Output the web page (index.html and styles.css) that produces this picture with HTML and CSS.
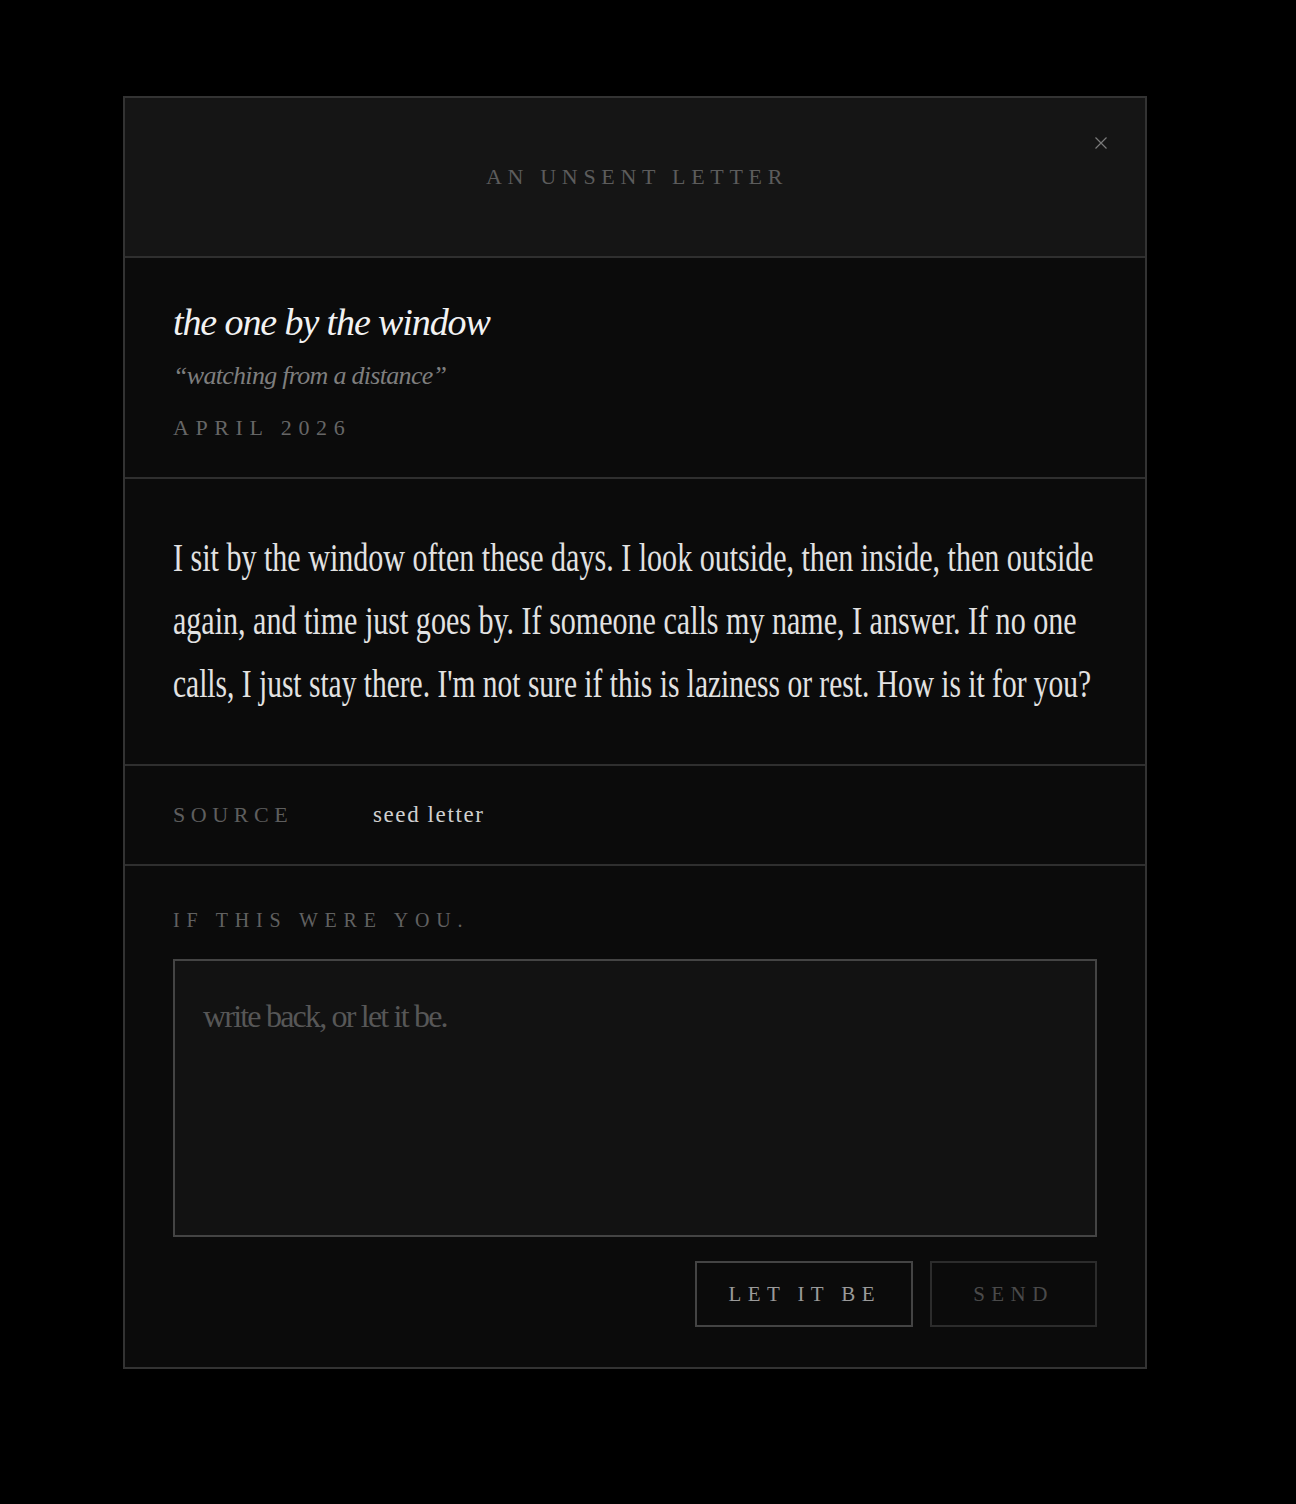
FILE: index.html
```html
<!DOCTYPE html>
<html lang="en">
<head>
<meta charset="utf-8">
<title>An Unsent Letter</title>
<link rel="stylesheet" href="styles.css">
</head>
<body>
<div class="overlay">
  <section class="modal" role="dialog" aria-label="An unsent letter">
    <header class="modal-head">
      <h2 class="modal-title">AN UNSENT LETTER</h2>
      <button class="close" aria-label="Close">
        <svg width="12" height="12" viewBox="0 0 12 12" aria-hidden="true"><path d="M0.5 0.5 L11.5 11.5 M11.5 0.5 L0.5 11.5" stroke="#7a7a7a" stroke-width="1.2" fill="none"/></svg>
      </button>
    </header>
    <div class="meta">
      <h1 class="letter-name">the one by the window</h1>
      <p class="letter-sub">“watching from a distance”</p>
      <p class="letter-date">APRIL 2026</p>
    </div>
    <div class="letter-body">
      <p class="body-text">
        <span class="line">I sit by the window often these days. I look outside, then inside, then outside</span>
        <span class="line">again, and time just goes by. If someone calls my name, I answer. If no one</span>
        <span class="line line-tight">calls, I just stay there. I'm not sure if this is laziness or rest. How is it for you?</span>
      </p>
    </div>
    <div class="source-row">
      <span class="source-label">SOURCE</span>
      <span class="source-value">seed letter</span>
    </div>
    <div class="reply">
      <label class="reply-label" for="reply">IF THIS WERE YOU.</label>
      <textarea id="reply" class="reply-box" placeholder="write back, or let it be."></textarea>
      <div class="actions">
        <button class="btn btn-let">LET IT BE</button>
        <button class="btn btn-send">SEND</button>
      </div>
    </div>
  </section>
</div>
</body>
</html>
```
FILE: styles.css
```css
html, body {
  margin: 0;
  padding: 0;
  background: #000;
}
body {
  font-family: "Liberation Serif", "Times New Roman", serif;
  min-height: 1504px;
}
.overlay {
  padding: 96px 0 0 123px;
}
.modal {
  width: 1024px;
  box-sizing: border-box;
  border: 2px solid #333;
  background: #0b0b0b;
}
.modal-head {
  position: relative;
  height: 158px;
  background: #151515;
  border-bottom: 2px solid #2f2f2f;
  display: flex;
  align-items: center;
  justify-content: center;
}
.modal-title {
  margin: 0;
  padding-left: 4px;
  font-weight: normal;
  font-size: 22px;
  letter-spacing: 5.7px;
  color: #5c5c5c;
  line-height: 28px;
}
.close {
  position: absolute;
  top: 38px;
  right: 37px;
  width: 14px;
  height: 14px;
  padding: 1px;
  border: 0;
  background: none;
  display: flex;
}
.meta {
  padding: 40px 48px 35px;
  border-bottom: 2px solid #2f2f2f;
}
.letter-name {
  margin: 0;
  font-style: italic;
  font-weight: normal;
  font-size: 38px;
  line-height: 48px;
  letter-spacing: -1.1px;
  color: #f2f2f2;
}
.letter-sub {
  margin: 14px 0 0;
  font-style: italic;
  font-size: 26px;
  line-height: 32px;
  letter-spacing: -0.7px;
  color: #7e7e7e;
}
.letter-date {
  margin: 22px 0 0;
  font-size: 22px;
  line-height: 28px;
  letter-spacing: 6.6px;
  color: #666;
}
.letter-body {
  padding: 47px 48px 49px;
  border-bottom: 2px solid #2f2f2f;
}
.body-text {
  margin: 0;
  font-size: 41px;
  line-height: 63px;
  color: #e2e2e2;
}
.line {
  display: block;
  white-space: nowrap;
  transform: scaleX(0.733);
  transform-origin: left center;
}
.line-tight {
  transform: scaleX(0.719);
}
.source-row {
  display: grid;
  grid-template-columns: 200px 1fr;
  align-items: baseline;
  padding: 35px 48px 35px;
  border-bottom: 2px solid #2f2f2f;
}
.source-label {
  font-size: 22px;
  line-height: 28px;
  letter-spacing: 5.6px;
  color: #5e5e5e;
}
.source-value {
  font-size: 23px;
  line-height: 28px;
  letter-spacing: 1.6px;
  color: #d0d0d0;
}
.reply {
  padding: 42px 48px 40px;
}
.reply-label {
  display: block;
  font-size: 20px;
  line-height: 24px;
  letter-spacing: 6.8px;
  color: #616161;
}
.reply-box {
  display: block;
  width: 100%;
  height: 278px;
  box-sizing: border-box;
  margin-top: 27px;
  padding: 31px 28px;
  background: #121212;
  border: 2px solid #444;
  border-radius: 0;
  resize: none;
  outline: none;
  font-family: "Liberation Serif", "Times New Roman", serif;
  font-size: 32px;
  line-height: 48px;
  color: #ddd;
}
.reply-box::placeholder {
  color: #575757;
  letter-spacing: -1.8px;
}
.actions {
  display: flex;
  justify-content: flex-end;
  gap: 17px;
  margin-top: 24px;
}
.btn {
  height: 66px;
  min-width: 167px;
  padding: 0 30px 0 32px;
  box-sizing: border-box;
  background: #0b0b0b;
  border: 2px solid #444;
  border-radius: 0;
  font-family: "Liberation Serif", "Times New Roman", serif;
  font-size: 21px;
  letter-spacing: 6.4px;
  color: #9a9a9a;
}
.btn-send {
  border-color: #2c2c2c;
  color: #4a4a4a;
  padding: 0;
}
```
